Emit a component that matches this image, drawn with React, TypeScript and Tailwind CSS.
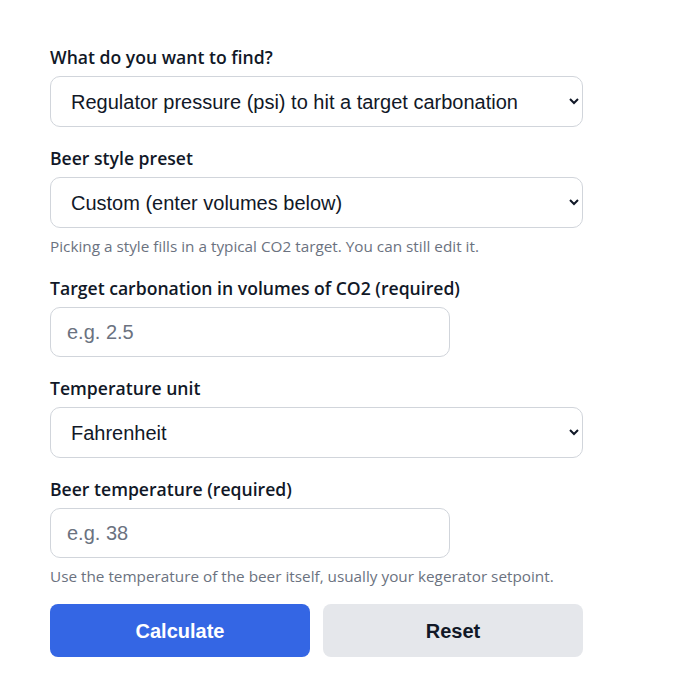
import { useState } from "react";

const labelCls =
  "block text-[17.6px] leading-[24px] font-semibold text-[#111827] mb-[7px] [font-family:'Open_Sans',sans-serif]";
const selectCls =
  "block w-full h-[51px] px-4 rounded-[10px] border border-[#d1d5db] bg-white text-[20px] text-[#111827] [font-family:'Liberation_Sans',Arial,sans-serif]";
const inputCls =
  "block w-[400px] h-[50px] px-4 rounded-[10px] border border-[#d1d5db] bg-white text-[20px] text-[#111827] placeholder:text-[#6b7280] [font-family:'Liberation_Sans',Arial,sans-serif]";
const helpCls =
  "mt-[8px] text-[15.3px] leading-[20px] text-[#6b7280] [font-family:'Open_Sans',sans-serif]";

export default function App() {
  const [mode, setMode] = useState("pressure");
  const [style, setStyle] = useState("custom");
  const [vols, setVols] = useState("");
  const [unit, setUnit] = useState("F");
  const [temp, setTemp] = useState("");

  const reset = () => {
    setMode("pressure");
    setStyle("custom");
    setVols("");
    setUnit("F");
    setTemp("");
  };

  return (
    <div className="min-h-[697px] bg-white pl-[50px] pt-[45px]">
      <form className="w-[533px]" onSubmit={(e) => e.preventDefault()}>
        <div>
          <label className={labelCls}>What do you want to find?</label>
          <select className={selectCls} value={mode} onChange={(e) => setMode(e.target.value)}>
            <option value="pressure">Regulator pressure (psi) to hit a target carbonation</option>
            <option value="volumes">Carbonation (volumes) at a given pressure</option>
          </select>
        </div>

        <div className="mt-[19px]">
          <label className={labelCls}>Beer style preset</label>
          <select className={selectCls} value={style} onChange={(e) => setStyle(e.target.value)}>
            <option value="custom">Custom (enter volumes below)</option>
            <option value="ale">British ale (1.5 – 2.0)</option>
            <option value="lager">American lager (2.5 – 2.8)</option>
            <option value="wheat">German wheat (3.3 – 4.5)</option>
          </select>
          <p className={helpCls}>Picking a style fills in a typical CO2 target. You can still edit it.</p>
        </div>

        <div className="mt-[20px]">
          <label className={labelCls}>Target carbonation in volumes of CO2 (required)</label>
          <input
            className={inputCls}
            placeholder="e.g. 2.5"
            value={vols}
            onChange={(e) => setVols(e.target.value)}
          />
        </div>

        <div className="mt-[19px]">
          <label className={labelCls}>Temperature unit</label>
          <select className={selectCls} value={unit} onChange={(e) => setUnit(e.target.value)}>
            <option value="F">Fahrenheit</option>
            <option value="C">Celsius</option>
          </select>
        </div>

        <div className="mt-[19px]">
          <label className={labelCls}>Beer temperature (required)</label>
          <input
            className={inputCls}
            placeholder="e.g. 38"
            value={temp}
            onChange={(e) => setTemp(e.target.value)}
          />
          <p className={helpCls}>Use the temperature of the beer itself, usually your kegerator setpoint.</p>
        </div>

        <div className="mt-[18px] grid grid-cols-2 gap-[13px]">
          <button
            type="submit"
            className="h-[53px] rounded-[8px] bg-[#3466e4] text-white text-[20px] font-bold [font-family:'Liberation_Sans',Arial,sans-serif]"
          >
            Calculate
          </button>
          <button
            type="button"
            onClick={reset}
            className="h-[53px] rounded-[8px] bg-[#e5e7eb] text-[#111827] text-[20px] font-bold [font-family:'Liberation_Sans',Arial,sans-serif]"
          >
            Reset
          </button>
        </div>
      </form>
    </div>
  );
}
